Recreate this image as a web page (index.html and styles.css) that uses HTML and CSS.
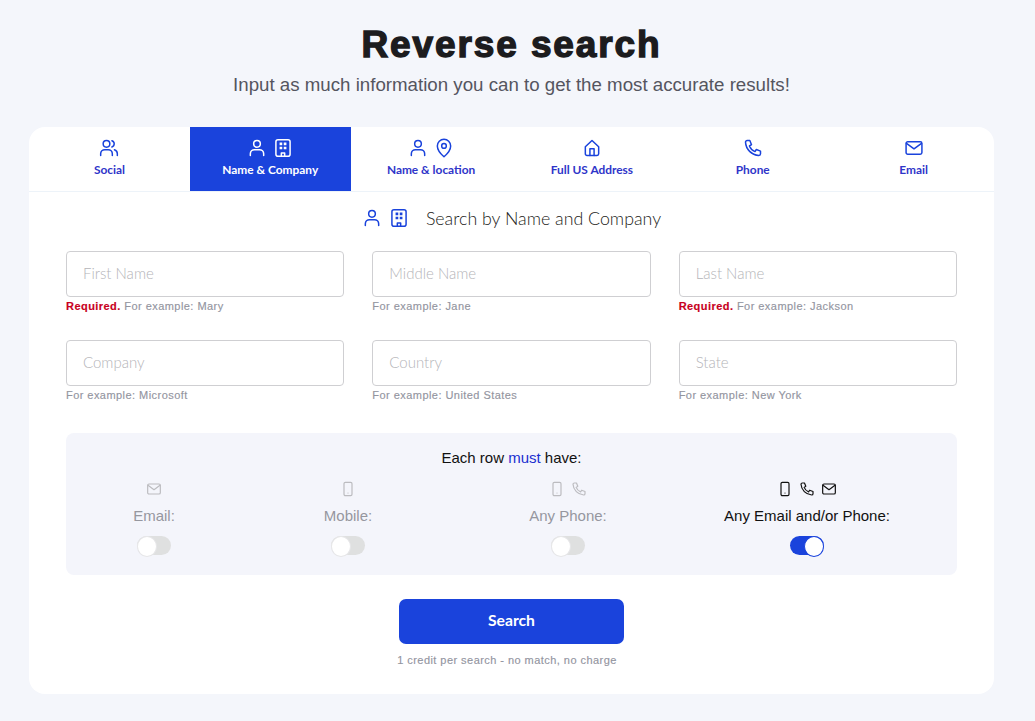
FILE: index.html
```html
<!DOCTYPE html>
<html lang="en">
<head>
    <meta charset="UTF-8">
    <title>Reverse search</title>
    <link rel="stylesheet" href="styles.css">
</head>
<body>
    <svg class="defs" width="0" height="0" aria-hidden="true">
        <symbol id="i-person" viewBox="0 0 24 24"><circle cx="12" cy="7" r="4"/><path d="M4 21v-2a5 5 0 0 1 5-5h6a5 5 0 0 1 5 5v2"/></symbol>
        <symbol id="i-building" viewBox="0 0 24 24"><rect x="3.5" y="2" width="17" height="20" rx="2.5"/><path d="M9.5 7h.01M14.5 7h.01M9.5 12h.01M14.5 12h.01" stroke-width="3.2" stroke-linecap="square"/><path d="M10 22v-4h4v4" stroke-width="1.8"/></symbol>
        <symbol id="i-social" viewBox="0 0 24 24"><circle cx="9" cy="7" r="4"/><path d="M2 21v-2a5 5 0 0 1 5-5h4a5 5 0 0 1 5 5v2"/><path d="M15.5 3.2a4 4 0 0 1 0 7.6"/><path d="M22 21v-2a5 5 0 0 0-3.5-4.8"/></symbol>
        <symbol id="i-pin" viewBox="0 0 24 24"><path d="M12 22.5s-8-7-8-13a8 8 0 0 1 16 0c0 6-8 13-8 13z"/><circle cx="12" cy="9.5" r="2.8"/></symbol>
        <symbol id="i-home" viewBox="0 0 24 24"><path d="M4 10.5 12 3l8 7.5V19a2 2 0 0 1-2 2H6a2 2 0 0 1-2-2z"/><path d="M9.5 21v-8h5v8"/></symbol>
        <symbol id="i-phone" viewBox="0 0 24 24"><path d="M5 3h3.2l2 5-2.5 1.6a12 12 0 0 0 6.7 6.7l1.6-2.5 5 2v3.2a2 2 0 0 1-2 2A17 17 0 0 1 3 5a2 2 0 0 1 2-2z"/></symbol>
        <symbol id="i-mail" viewBox="0 0 24 24"><rect x="2.5" y="4.5" width="19" height="15" rx="2"/><path d="m3 6.5 9 6.5 9-6.5"/></symbol>
        <symbol id="i-mobile" viewBox="0 0 24 24"><rect x="6" y="2" width="12" height="20" rx="2"/><path d="M12 18h.01" stroke-width="1.8"/></symbol>
    </svg>

    <header class="page-head">
        <h1>Reverse search</h1>
        <p>Input as much information you can to get the most accurate results!</p>
    </header>

    <main class="card">
        <nav class="tabs">
            <a class="tab">
                <span class="tab-icons"><svg class="icon"><use href="#i-social"/></svg></span>
                Social
            </a>
            <a class="tab active">
                <span class="tab-icons"><svg class="icon"><use href="#i-person"/></svg><svg class="icon"><use href="#i-building"/></svg></span>
                Name &amp; Company
            </a>
            <a class="tab">
                <span class="tab-icons"><svg class="icon"><use href="#i-person"/></svg><svg class="icon"><use href="#i-pin"/></svg></span>
                Name &amp; location
            </a>
            <a class="tab">
                <span class="tab-icons"><svg class="icon"><use href="#i-home"/></svg></span>
                Full US Address
            </a>
            <a class="tab">
                <span class="tab-icons"><svg class="icon"><use href="#i-phone"/></svg></span>
                Phone
            </a>
            <a class="tab">
                <span class="tab-icons"><svg class="icon"><use href="#i-mail"/></svg></span>
                Email
            </a>
        </nav>

        <div class="form-body">
            <h2 class="form-title">
                <span class="tab-icons"><svg class="icon"><use href="#i-person"/></svg><svg class="icon"><use href="#i-building"/></svg></span>
                Search by Name and Company
            </h2>

            <div class="fields">
                <div class="field">
                    <input type="text" placeholder="First Name">
                    <small><b>Required.</b> For example: Mary</small>
                </div>
                <div class="field">
                    <input type="text" placeholder="Middle Name">
                    <small>For example: Jane</small>
                </div>
                <div class="field">
                    <input type="text" placeholder="Last Name">
                    <small><b>Required.</b> For example: Jackson</small>
                </div>
                <div class="field">
                    <input type="text" placeholder="Company">
                    <small>For example: Microsoft</small>
                </div>
                <div class="field">
                    <input type="text" placeholder="Country">
                    <small>For example: United States</small>
                </div>
                <div class="field">
                    <input type="text" placeholder="State">
                    <small>For example: New York</small>
                </div>
            </div>

            <section class="rules">
                <p class="rules-title">Each row <span>must</span> have:</p>
                <div class="rules-grid">
                    <div class="rule">
                        <span class="rule-icons"><svg class="icon"><use href="#i-mail"/></svg></span>
                        <span class="rule-label">Email:</span>
                        <span class="toggle"></span>
                    </div>
                    <div class="rule">
                        <span class="rule-icons"><svg class="icon"><use href="#i-mobile"/></svg></span>
                        <span class="rule-label">Mobile:</span>
                        <span class="toggle"></span>
                    </div>
                    <div class="rule">
                        <span class="rule-icons"><svg class="icon"><use href="#i-mobile"/></svg><svg class="icon"><use href="#i-phone"/></svg></span>
                        <span class="rule-label">Any Phone:</span>
                        <span class="toggle"></span>
                    </div>
                    <div class="rule on">
                        <span class="rule-icons"><svg class="icon"><use href="#i-mobile"/></svg><svg class="icon"><use href="#i-phone"/></svg><svg class="icon"><use href="#i-mail"/></svg></span>
                        <span class="rule-label">Any Email and/or Phone:</span>
                        <span class="toggle"></span>
                    </div>
                </div>
            </section>

            <div class="actions">
                <button class="btn" type="button">Search</button>
                <small>1 credit per search - no match, no charge</small>
            </div>
        </div>
    </main>
</body>
</html>
```

FILE: styles.css
```css
* {
    box-sizing: border-box;
}
body {
    margin: 0;
    padding: 0 41px 27px 29px;
    background-color: #f4f6fb;
    font-family: "Liberation Sans", Arial, sans-serif;
    color: #1d1d1f;
}
.defs {
    position: absolute;
}
.icon {
    width: 20px;
    height: 20px;
    fill: none;
    stroke: currentColor;
    stroke-width: 1.8;
    stroke-linecap: round;
    stroke-linejoin: round;
}
.page-head {
    height: 127px;
    padding-top: 23px;
    text-align: center;
}
h1 {
    margin: 0;
    font-size: 37px;
    line-height: 44px;
    font-weight: 700;
    letter-spacing: 1.9px;
    color: #1c1c1e;
    -webkit-text-stroke: 1.4px #1c1c1e;
}
.page-head p {
    margin: 5px 0 0;
    font-size: 18.7px;
    line-height: 26px;
    color: #55555f;
}
.card {
    background: #fff;
    border-radius: 16px;
    overflow: hidden;
    height: 567px;
}
/* tabs */
.tabs {
    display: grid;
    grid-template-columns: repeat(6, 1fr);
    height: 65px;
    border-bottom: 1px solid #edf3f9;
}
.tab {
    display: flex;
    flex-direction: column;
    align-items: center;
    padding-top: 11px;
    font-family: Lato, sans-serif;
    font-size: 11.9px;
    font-weight: 700;
    line-height: 14px;
    color: #2f35c9;
}
.tab .icon {
    color: #1a43dc;
}
.tab-icons {
    display: flex;
    gap: 6px;
    height: 25px;
}
.tab.active {
    background-color: #1a43dc;
    color: #fff;
}
.tab.active .icon {
    color: #fff;
}
/* form */
.form-body {
    padding: 0 37px;
}
.form-title {
    display: flex;
    justify-content: center;
    align-items: center;
    gap: 17px;
    height: 59px;
    margin: 0;
    padding-bottom: 7px;
    font-family: Lato, sans-serif;
    font-size: 17.8px;
    font-weight: 300;
    color: #1d1d20;
}
.form-title .tab-icons {
    gap: 7px;
    height: 20px;
    color: #1a43dc;
}
.fields {
    display: grid;
    grid-template-columns: repeat(3, 1fr);
    column-gap: 28px;
    row-gap: 22px;
}
.field input {
    display: block;
    width: 100%;
    height: 46px;
    padding: 0 16px 3px;
    border: 1px solid #cfcfd2;
    border-radius: 4px;
    font-family: Lato, sans-serif;
    font-size: 15px;
    font-weight: 300;
    color: #333;
    outline: none;
}
.field input::placeholder {
    color: #b4b4b8;
    opacity: 1;
}
small {
    display: block;
    font-size: 11px;
    letter-spacing: 0.45px;
    color: #93959f;
    -webkit-text-stroke: 0.15px currentColor;
}
.field small {
    height: 18px;
    margin-top: 3px;
    line-height: 13px;
}
small b {
    color: #c8001e;
}
/* row rules */
.rules {
    height: 142px;
    margin-top: 26px;
    padding-top: 16px;
    background-color: #f4f5fb;
    border-radius: 8px;
    font-size: 15px;
}
.rules-title {
    margin: 0 0 14px;
    text-align: center;
    line-height: 18px;
    color: #111;
}
.rules-title span {
    color: #1a2fd0;
}
.rules-grid {
    display: grid;
    grid-template-columns: 176px 212px 228px 250px;
}
.rule {
    display: flex;
    flex-direction: column;
    align-items: center;
    color: #96979f;
}
.rule.on {
    color: #111;
}
.rule-icons {
    display: flex;
    gap: 6px;
    height: 16px;
}
.rule-icons .icon {
    width: 16px;
    height: 16px;
}
.rule:not(.on) .rule-icons {
    color: #bcbcc0;
}
.rule-label {
    margin-top: 9px;
    line-height: 20px;
}
.toggle {
    position: relative;
    width: 34px;
    height: 19px;
    margin-top: 10px;
    border-radius: 10px;
    background-color: #dfe0e0;
}
.toggle::after {
    content: "";
    position: absolute;
    left: 0;
    top: 0;
    width: 18px;
    height: 19px;
    border-radius: 50%;
    background: #fff;
    border: 1px solid #e6e6e8;
}
.rule.on .toggle {
    background-color: #1a43dc;
}
.rule.on .toggle::after {
    left: auto;
    right: 0;
    border-color: #1a43dc;
}
/* submit */
.actions {
    display: flex;
    flex-direction: column;
    align-items: center;
    margin-top: 24px;
}
.btn {
    width: 225px;
    height: 45px;
    padding-bottom: 4px;
    border: none;
    border-radius: 7px;
    background-color: #1a43dc;
    color: #fff;
    font-family: Lato, sans-serif;
    font-size: 15.7px;
    font-weight: 700;
    cursor: pointer;
}
.actions small {
    margin: 10px 9px 0 0;
    line-height: 13px;
}
```
